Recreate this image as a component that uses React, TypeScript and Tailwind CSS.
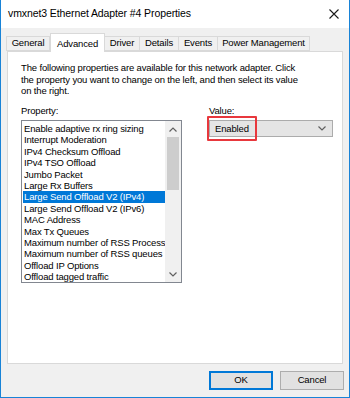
import React from "react";

const tabs = [
  { name: "General", w: "w-[44px]" },
  { name: "Advanced", w: "w-[55px]" },
  { name: "Driver", w: "w-[35px]" },
  { name: "Details", w: "w-[39px]" },
  { name: "Events", w: "w-[39px]" },
  { name: "Power Management", w: "w-[92px]" },
];

const props = [
  "Enable adaptive rx ring sizing",
  "Interrupt Moderation",
  "IPv4 Checksum Offload",
  "IPv4 TSO Offload",
  "Jumbo Packet",
  "Large Rx Buffers",
  "Large Send Offload V2 (IPv4)",
  "Large Send Offload V2 (IPv6)",
  "MAC Address",
  "Max Tx Queues",
  "Maximum number of RSS Processors",
  "Maximum number of RSS queues",
  "Offload IP Options",
  "Offload tagged traffic",
];

const Chevron = ({ up }: { up?: boolean }) => (
  <svg width="8" height="5" viewBox="0 0 8 5" className="block">
    <path
      d={up ? "M0.5 4.5 L4 1 L7.5 4.5" : "M0.5 0.5 L4 4 L7.5 0.5"}
      fill="none"
      stroke="#606060"
      strokeWidth="1.2"
    />
  </svg>
);

export default function App() {
  return (
    <div
      className="w-[350px] h-[398px] flex flex-col bg-[#f0f0f0] border-l border-r border-b border-[#1883d7] text-[#000] text-[9.5px] tracking-[-0.15px] overflow-hidden"
      style={{ fontFamily: '"Liberation Sans", Arial, sans-serif' }}
    >
      {/* title bar */}
      <div className="h-[28px] bg-white flex items-center justify-between pl-[7px] pr-[10px] shrink-0">
        <span className="text-[10.5px] tracking-[-0.1px]">vmxnet3 Ethernet Adapter #4 Properties</span>
        <svg width="10" height="10" viewBox="0 0 10 10">
          <path d="M0.5 0.5 L9.5 9.5 M9.5 0.5 L0.5 9.5" stroke="#1a1a1a" strokeWidth="1.1" />
        </svg>
      </div>

      {/* tabs */}
      <div className="flex items-end pl-[5px] mt-[5px] h-[18px] relative z-10">
        {tabs.map((t, i) =>
          t.name === "Advanced" ? (
            <div
              key={t.name}
              className={`${t.w} h-[19px] -mb-px bg-white border border-b-0 border-[#d9d9d9] flex justify-center pt-[3px]`}
            >
              {t.name}
            </div>
          ) : (
            <div
              key={t.name}
              className={`${t.w} h-[15px] bg-[#f0f0f0] border border-[#d9d9d9] ${i === 0 ? "" : "border-l-0"} flex items-center justify-center`}
            >
              {t.name}
            </div>
          )
        )}
      </div>

      {/* panel */}
      <div className="ml-[6px] mr-[6px] h-[313px] bg-white border border-[#d9d9d9] pl-[13px] pr-[9px] pt-[10px] leading-[11.5px] shrink-0">
        <p>
          The following properties are available for this network adapter. Click
          <br />
          the property you want to change on the left, and then select its value
          <br />
          on the right.
        </p>

        <div className="flex mt-[8px]">
          <div className="w-[161px] flex flex-col">
            <span>Property:</span>
            <div className="mt-[4px] h-[163px] border border-[#828790] flex">
              <div className="flex-1 pt-[2px] pl-[1px] overflow-hidden whitespace-nowrap">
                {props.map((p) => (
                  <div
                    key={p}
                    className={
                      p === "Large Send Offload V2 (IPv4)"
                        ? "h-[11.4px] leading-[11.4px] bg-[#0078d7] text-white pl-[1px]"
                        : "h-[11.4px] leading-[11.4px] pl-[1px]"
                    }
                  >
                    {p}
                  </div>
                ))}
              </div>
              <div className="w-[16px] bg-[#f0f0f0] flex flex-col items-center">
                <div className="h-[16px] flex items-center justify-center">
                  <Chevron up />
                </div>
                <div className="w-[12px] h-[53px] bg-[#cdcdcd]" />
                <div className="flex-1" />
                <div className="h-[16px] flex items-center justify-center">
                  <Chevron />
                </div>
              </div>
            </div>
          </div>

          <div className="ml-[27px] w-[124px] flex flex-col">
            <span>Value:</span>
            <div className="relative mt-[4px] h-[17px] bg-[#e5e5e5] border border-[#acacac] flex items-center justify-between pl-[5px] pr-[6px]">
              <span>Enabled</span>
              <Chevron />
              <div className="absolute left-[-3px] top-[-5px] w-[50px] h-[25px] border-2 border-[#e8383d] rounded-[1px]" />
            </div>
          </div>
        </div>
      </div>

      {/* buttons */}
      <div className="flex justify-end gap-[7px] pr-[5px] mt-[7px]">
        <button className="w-[64px] h-[19px] bg-[#e1e1e1] border-2 border-[#0078d7]">OK</button>
        <button className="w-[64px] h-[19px] bg-[#e1e1e1] border border-[#adadad]">Cancel</button>
      </div>
    </div>
  );
}
